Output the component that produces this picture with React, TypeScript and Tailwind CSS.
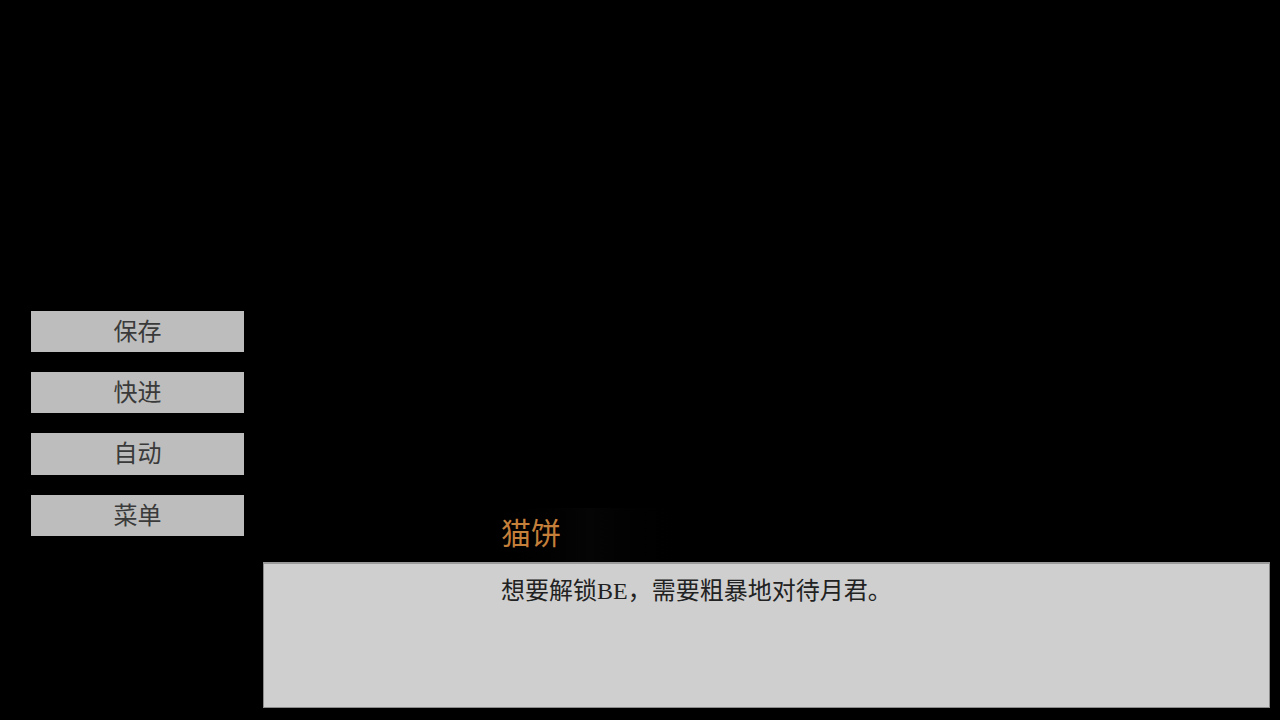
import React from 'react';

const buttons = ['保存', '快进', '自动', '菜单'];

const font = { fontFamily: '"Liberation Serif", "Noto Sans CJK SC", serif' };

export default function App() {
  return (
    <div className="w-[1280px] h-[720px] bg-black flex overflow-hidden" style={font}>
      {/* quick menu */}
      <div className="w-[213px] ml-[31px] pt-[311px] flex flex-col gap-[20px]">
        {buttons.map((b, i) => (
          <div
            key={b}
            className={`${i === 2 ? 'h-[42px]' : 'h-[41px]'} bg-[#bdbdbd] flex items-center justify-center text-[24px] text-[#3a3a3a] leading-none`}
          >
            {b}
          </div>
        ))}
      </div>

      {/* dialogue */}
      <div className="ml-[19px] w-[1007px] pt-[508px] flex flex-col">
        <div className="h-[54px] flex">
          <div className="ml-[207px] w-[240px] h-full bg-gradient-to-r from-[#000] via-[#050505] to-[#000] flex items-center pl-[31px]">
            <span className="text-[30px] leading-none text-[#c47f3a] -mt-[3px]">猫饼</span>
          </div>
        </div>
        <div className="h-[146px] bg-[#cfcfcf] border border-[#8c8c8c] border-t-2 border-t-[#9a9a9a] pl-[237px] pt-[11px]">
          <p className="text-[24px] leading-[32px] text-[#222]">想要解锁BE，需要粗暴地对待月君。</p>
        </div>
      </div>
    </div>
  );
}
